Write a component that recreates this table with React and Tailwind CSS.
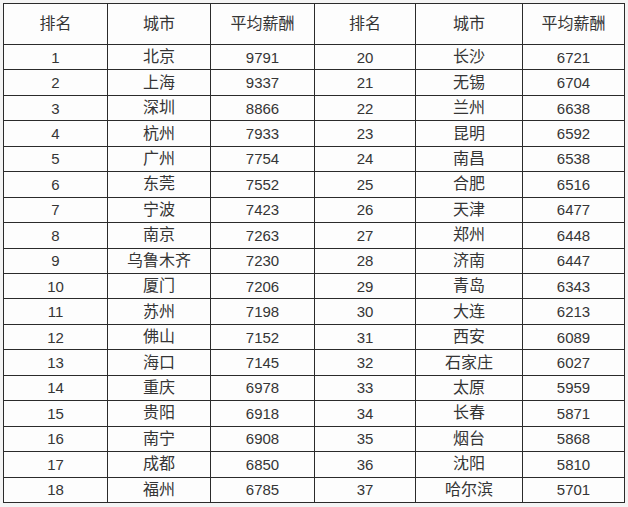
import React from 'react';

const left = [
  ['1', '北京', '9791'], ['2', '上海', '9337'], ['3', '深圳', '8866'], ['4', '杭州', '7933'],
  ['5', '广州', '7754'], ['6', '东莞', '7552'], ['7', '宁波', '7423'], ['8', '南京', '7263'],
  ['9', '乌鲁木齐', '7230'], ['10', '厦门', '7206'], ['11', '苏州', '7198'], ['12', '佛山', '7152'],
  ['13', '海口', '7145'], ['14', '重庆', '6978'], ['15', '贵阳', '6918'], ['16', '南宁', '6908'],
  ['17', '成都', '6850'], ['18', '福州', '6785'],
];

const right = [
  ['20', '长沙', '6721'], ['21', '无锡', '6704'], ['22', '兰州', '6638'], ['23', '昆明', '6592'],
  ['24', '南昌', '6538'], ['25', '合肥', '6516'], ['26', '天津', '6477'], ['27', '郑州', '6448'],
  ['28', '济南', '6447'], ['29', '青岛', '6343'], ['30', '大连', '6213'], ['31', '西安', '6089'],
  ['32', '石家庄', '6027'], ['33', '太原', '5959'], ['34', '长春', '5871'], ['35', '烟台', '5868'],
  ['36', '沈阳', '5810'], ['37', '哈尔滨', '5701'],
];

const headers = ['排名', '城市', '平均薪酬', '排名', '城市', '平均薪酬'];

const Cell = ({ children, cjk }) => (
  <div
    className={`bg-[#fdfdfd] flex items-center justify-center text-[#353535] leading-none ${
      cjk ? 'text-[16px]' : 'text-[15px]'
    }`}
  >
    {children}
  </div>
);

export default function App() {
  return (
    <div
      className="w-[628px] h-[507px] bg-[#f4f4f4] p-[3px]"
      style={{ fontFamily: '"Liberation Sans", "Noto Sans CJK SC", sans-serif' }}
    >
      <div className="w-[622px] h-[500px] bg-[#2b2b2b] p-px gap-px grid grid-cols-[103px_102px_103px_100px_106px_101px] grid-rows-[40px_repeat(18,minmax(0,1fr))]">
        {headers.map((h, i) => (
          <div key={'h' + i} className="bg-[#fdfdfd] flex items-center justify-center text-[16px] text-[#353535] leading-none">
            {h}
          </div>
        ))}
        {left.map((row, i) => (
          <React.Fragment key={i}>
            <Cell>{row[0]}</Cell>
            <Cell cjk>{row[1]}</Cell>
            <Cell>{row[2]}</Cell>
            <Cell>{right[i][0]}</Cell>
            <Cell cjk>{right[i][1]}</Cell>
            <Cell>{right[i][2]}</Cell>
          </React.Fragment>
        ))}
      </div>
    </div>
  );
}
